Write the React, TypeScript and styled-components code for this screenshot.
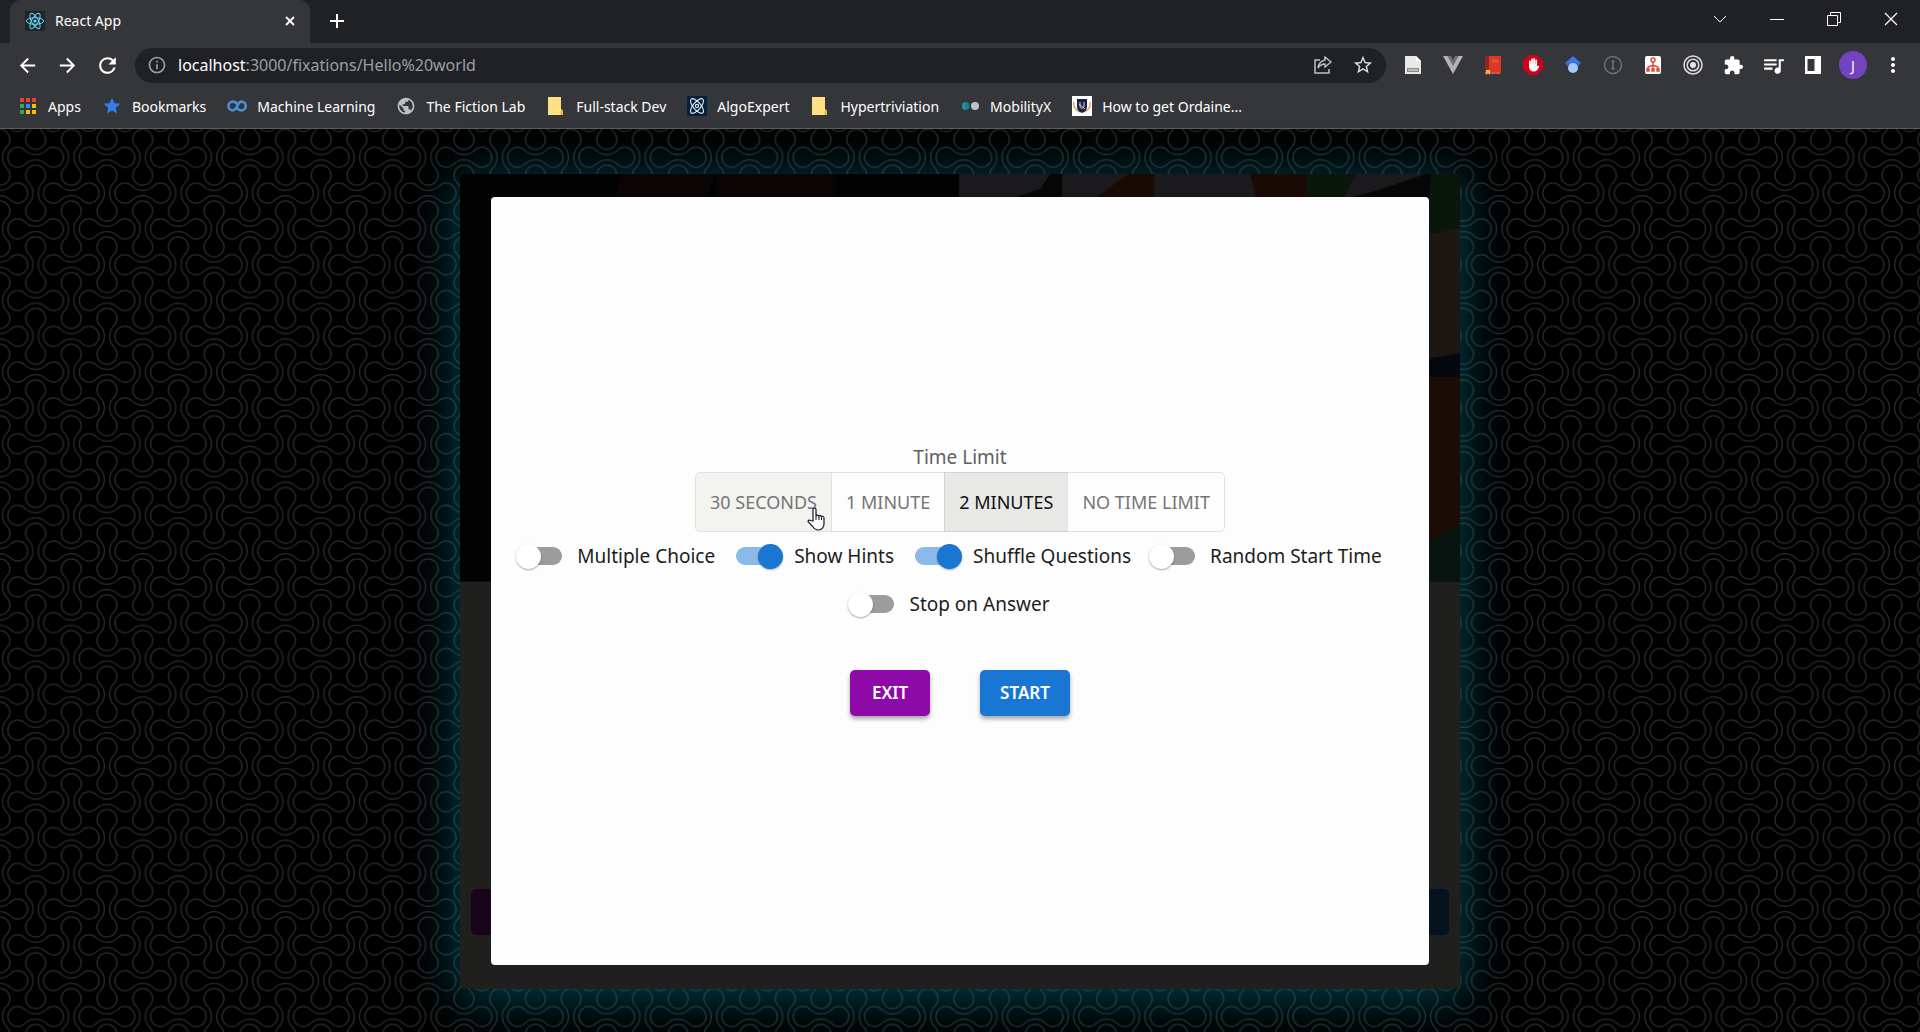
import React, { useState } from "react";
import styled, { createGlobalStyle } from "styled-components";
import {
  MdArrowBack,
  MdArrowForward,
  MdExtension,
  MdInfoOutline,
  MdMoreVert,
  MdPublic,
  MdQueueMusic,
  MdRefresh,
  MdStar,
  MdStarBorder,
} from "react-icons/md";

const uiFont = `"Noto Sans", "Open Sans", sans-serif`;

const GlobalStyle = createGlobalStyle`
  *, *::before, *::after { box-sizing: border-box; }
  body { margin: 0; background: #000; }
  button, input { font: inherit; color: inherit; }
  button { border: 0; padding: 0; background: none; cursor: pointer; }
  svg { display: block; flex: none; }
`;

const Window = styled.div`
  display: flex;
  flex-direction: column;
  min-height: 100vh;
  font-family: ${uiFont};
`;

/* ---------- browser frame ---------- */

const Frame = styled.header`
  flex: none;
  background: #35363a;
  color: #fff;
  border-bottom: 1px solid #5c5d62;
`;

const TabStrip = styled.div`
  display: flex;
  align-items: flex-start;
  height: 43px;
  padding: 0 1px 0 10px;
  background: #202124;
`;

const Tab = styled.div`
  display: flex;
  align-items: center;
  gap: 10px;
  width: 300px;
  height: 43px;
  padding: 0 10px 2px 15px;
  border-radius: 10px 10px 0 0;
  background: #35363a;
  font-size: 14px;
`;

const TabTitle = styled.span`
  flex: 1;
`;

const IconButton = styled.button<{ $w?: number; $h?: number; $color?: string }>`
  display: flex;
  flex: none;
  align-items: center;
  justify-content: center;
  width: ${(p) => p.$w ?? 40}px;
  height: ${(p) => p.$h ?? 40}px;
  color: ${(p) => p.$color ?? "#fff"};
`;

const WindowControls = styled.div`
  display: flex;
  margin-left: auto;
`;

const Toolbar = styled.div`
  display: flex;
  align-items: center;
  height: 44px;
  padding: 0 7px;
`;

const AddressBar = styled.label`
  display: flex;
  flex: 1;
  align-items: center;
  height: 35px;
  margin: 0 7px 0 8px;
  padding: 0 3px 0 12px;
  border-radius: 18px;
  background: #202124;
  color: #9aa0a6;
  font-size: 16px;
`;

const Host = styled.span`
  margin-left: 11px;
  color: #fff;
`;

const AddressInput = styled.input`
  flex: 1;
  min-width: 0;
  padding: 0;
  border: 0;
  outline: 0;
  background: none;
`;

const Avatar = styled.span`
  display: flex;
  align-items: center;
  justify-content: center;
  width: 28px;
  height: 28px;
  border-radius: 50%;
  background: #7444c0;
  font-size: 14px;
`;

const BookmarkBar = styled.nav`
  display: flex;
  align-items: center;
  gap: 21px;
  height: 41px;
  padding: 0 18px 3px;
`;

const Bookmark = styled.a`
  display: flex;
  align-items: center;
  gap: 10px;
  color: #fff;
  font-size: 14px;
  text-decoration: none;
  white-space: nowrap;
`;

const IconSlot = styled.span`
  display: flex;
  justify-content: center;
  width: 20px;
`;

/* ---------- page ---------- */

const Page = styled.main`
  position: relative;
  display: flex;
  flex: 1;
  padding: 45px 23.95% 43px;
  background: #000;
`;

const Wallpaper = styled.svg`
  position: absolute;
  inset: 0;
  width: 100%;
  height: 100%;
`;

const Card = styled.section`
  position: relative;
  display: grid;
  flex: 1;
  border-radius: 5px;
  background: #1f1f1e;
  box-shadow: 0 6px 48px 4px rgba(0, 140, 165, 0.45);
`;

const Game = styled.div`
  display: flex;
  flex-direction: column;
  grid-area: 1 / 1;
`;

const Still = styled.svg`
  flex: 0 0 50%;
  width: 100%;
  min-height: 0;
  border-radius: 5px 5px 0 0;
`;

const GameControls = styled.div`
  display: flex;
  flex: 1;
  align-items: flex-end;
  justify-content: space-between;
  padding: 0 11px 54px;
`;

const DimButton = styled.span<{ $color: string }>`
  width: 90px;
  height: 46px;
  border-radius: 5px;
  background: ${(p) => p.$color};
`;

const Dialog = styled.form`
  display: flex;
  flex-direction: column;
  grid-area: 1 / 1;
  align-items: center;
  justify-content: center;
  margin: 23px 31px 24px;
  padding-bottom: 4px;
  border-radius: 4px;
  background: #fdfdfd;
  color: #1c1c1c;
  z-index: 1;
`;

const GroupLabel = styled.h2`
  margin: 0;
  color: #606060;
  font-size: 19px;
  font-weight: 400;
  line-height: 30px;
`;

const ToggleGroup = styled.div`
  display: flex;
  height: 60px;
`;

const Toggle = styled.button<{ $hover?: boolean }>`
  position: relative;
  padding: 0 14px;
  border: 1px solid #e0e0e0;
  background: ${(p) => (p.$hover ? "#f3f3f0" : "transparent")};
  color: #757575;
  font-size: 18px;

  & + & {
    margin-left: -1px;
  }
  &:first-child {
    border-radius: 5px 0 0 5px;
  }
  &:last-child {
    border-radius: 0 5px 5px 0;
  }
  &[aria-pressed="true"] {
    background: #e8e8e6;
    border-color: #d2d2d0;
    color: #111;
  }
`;

const Pointer = styled.svg`
  position: absolute;
  right: 6px;
  bottom: 0;
`;

const Options = styled.div`
  display: flex;
  flex-wrap: wrap;
  justify-content: center;
`;

const Option = styled.label`
  display: flex;
  align-items: center;
  margin: 0 20px 0 -14px;
  font-size: 19px;
  white-space: nowrap;
  cursor: pointer;
`;

const Switch = styled.input`
  display: grid;
  align-items: center;
  width: 73px;
  height: 48px;
  margin: 0;
  appearance: none;
  cursor: pointer;

  &::before,
  &::after {
    content: "";
    grid-area: 1 / 1;
  }
  &::before {
    height: 18px;
    margin: 0 15px;
    border-radius: 9px;
    background: #9c9c9a;
  }
  &::after {
    width: 25px;
    height: 25px;
    margin-left: 12px;
    border-radius: 50%;
    background: #fff;
    box-shadow: 0 1px 2px rgba(0, 0, 0, 0.35);
  }
  &:checked::before {
    background: #8bbae8;
  }
  &:checked::after {
    margin-left: 37px;
    background: #1976d2;
  }
`;

const Actions = styled.div`
  display: flex;
  gap: 50px;
  margin-top: 42px;
`;

const Action = styled.button<{ $color: string }>`
  min-width: 80px;
  height: 46px;
  padding: 0 20px 2px;
  border-radius: 5px;
  background: ${(p) => p.$color};
  box-shadow: 0 3px 4px rgba(0, 0, 0, 0.35);
  color: #fff;
  font-size: 17px;
  font-weight: 600;
`;

/* ---------- drawings ---------- */

const Svg = ({ size = 20, box = 20, children }: { size?: number; box?: number; children: React.ReactNode }) => (
  <svg width={size} height={size} viewBox={`0 0 ${box} ${box}`} fill="none" aria-hidden="true">
    {children}
  </svg>
);

const Atom = () => (
  <Svg>
    <rect width="20" height="20" rx="1" fill="#20232a" />
    <g stroke="#61dafb" strokeWidth="1">
      <ellipse cx="10" cy="10" rx="8.6" ry="3.3" />
      <ellipse cx="10" cy="10" rx="8.6" ry="3.3" transform="rotate(60 10 10)" />
      <ellipse cx="10" cy="10" rx="8.6" ry="3.3" transform="rotate(120 10 10)" />
    </g>
    <circle cx="10" cy="10" r="1.6" fill="#61dafb" />
  </Svg>
);

const appsColors = ["#ea4335", "#ea4335", "#ea4335", "#34a853", "#4285f4", "#fbbc04", "#34a853", "#fbbc04", "#fbbc04"];
const AppsIcon = () => (
  <Svg size={18} box={18}>
    {appsColors.map((color, i) => (
      <rect key={i} x={1 + (i % 3) * 6} y={1 + Math.floor(i / 3) * 6} width="4" height="4" fill={color} />
    ))}
  </Svg>
);

const Infinity = () => (
  <Svg>
    <path
      d="M10.500 8C9.300 6.400 7.800 5.600 5.800 5.600a4.400 4.400 0 0 0 0 8.800c4.400 0 4.300-8.800 8.600-8.800a4.400 4.400 0 0 1 0 8.800c-2 0-3.300-1-4.300-2.400"
      stroke="#4a8fd0"
      strokeWidth="2.600"
    />
  </Svg>
);

const Folder = () => (
  <Svg>
    <path d="M2 1h13v12l2 2v4H2z" fill="#ffe082" />
    <path d="M15 13l2 2v4h-3z" fill="#e9b949" />
  </Svg>
);

const AlgoIcon = () => (
  <Svg>
    <rect width="20" height="20" rx="2" fill="#02203f" />
    <g stroke="#e8eef5" strokeWidth="1.1">
      <ellipse cx="10" cy="10" rx="9" ry="3.8" transform="rotate(50 10 10)" />
      <ellipse cx="10" cy="10" rx="9" ry="3.8" transform="rotate(130 10 10)" />
      <circle cx="10" cy="10" r="1.6" />
    </g>
  </Svg>
);

const MobilityIcon = () => (
  <Svg>
    <path d="M6 6a4 4 0 0 0 0 8z" fill="#1d98a8" />
    <path d="M5 6c3-.500 4.500 1.500 4.500 4S8 14.500 5 14z" fill="#177f92" />
    <circle cx="15" cy="10" r="4" fill="#bfc3c6" />
  </Svg>
);

const Crest = () => (
  <Svg>
    <rect width="20" height="20" fill="#fff" />
    <path d="M2 6c-1 5 1 8 6 10M18 6c1 5-1 8-6 10" stroke="#d9b06a" strokeWidth="1.500" />
    <path d="M5 3h10v8c0 3-2 5-5 6-3-1-5-3-5-6z" fill="#1b2240" />
    <path d="M8 6v4c0 3 4 3 4 0V6M7 8l6 5" stroke="#c9cdd8" />
  </Svg>
);

const bookmarks: [string, React.ReactNode][] = [
  ["Apps", <AppsIcon />],
  ["Bookmarks", <MdStar size={20} color="#2f80ed" />],
  ["Machine Learning", <Infinity />],
  ["The Fiction Lab", <MdPublic size={20} color="#bdc1c6" />],
  ["Full-stack Dev", <Folder />],
  ["AlgoExpert", <AlgoIcon />],
  ["Hypertriviation", <Folder />],
  ["MobilityX", <MobilityIcon />],
  ["How to get Ordaine...", <Crest />],
];

const extensions: [string, React.ReactNode][] = [
  [
    "Document",
    <Svg>
      <path d="M2 1h11l5 5v13H2z" fill="#e8e8e6" />
      <path d="M13 1v5h5z" fill="#fff" />
      <rect x="4" y="13" width="12" height="4" fill="#8c8c88" />
      <path d="M5 15h10" stroke="#e8e8e6" />
    </Svg>,
  ],
  [
    "Vue",
    <Svg>
      <path d="M0 1h5l5 9 5-9h5L10 19z" fill="#b4b4b2" />
      <path d="M4.500 1H8l2 4 2-4h3.500L10 11z" fill="#70726f" />
    </Svg>,
  ],
  [
    "Notebook",
    <Svg>
      <rect x="2" y="1" width="4" height="18" fill="#8d2a20" />
      <rect x="6" y="1" width="12" height="17" fill="#dd3826" />
      <path d="M9 5h6M9 7h6" stroke="#e8604f" />
      <path d="M2 17h15v2H2z" fill="#c9544a" />
      <path d="M3 15h4v5l-2-2-2 2z" fill="#f0b44c" />
    </Svg>,
  ],
  [
    "Blocker",
    <Svg>
      <path d="M6 0h8l6 6v8l-6 6H6l-6-6V6z" fill="#d4001a" />
      <path
        d="M6 11V6.500a.9.900 0 0 1 1.800 0V9h.3V4.500a.9.900 0 0 1 1.800 0V9h.3V4a.9.900 0 0 1 1.800 0v5h.3V5.500a.9.900 0 0 1 1.800 0v6c1-1 2-1 2 0-1 3-2.500 5-5.600 5C7.500 16.500 6 14 6 11z"
        fill="#fff"
      />
    </Svg>,
  ],
  [
    "Scholar",
    <Svg>
      <path d="M10 1l8 7-4 3H6L2 8z" fill="#3b78e0" />
      <circle cx="10" cy="13" r="5" fill="#a8c8fa" />
      <path d="M5 12a5 5 0 0 1 10 0l3-4H2z" fill="#3367c6" />
    </Svg>,
  ],
  [
    "Password manager",
    <Svg>
      <circle cx="10" cy="10" r="8.500" stroke="#707174" strokeWidth="1.500" />
      <path d="M10 5v10M8.500 6.500h3M8.500 13.500h3" stroke="#707174" strokeWidth="1.600" />
    </Svg>,
  ],
  [
    "Sitemap",
    <Svg>
      <rect x="2" y="1" width="16" height="18" rx="2" fill="#fff" />
      <g stroke="#dd4b39" strokeWidth="1.500">
        <circle cx="10" cy="5" r="2" />
        <path d="M10 7v8M5 15v-3l5-2 5 2v3" />
        <rect x="4" y="14" width="2" height="2" />
        <rect x="9" y="14" width="2" height="2" />
        <rect x="14" y="14" width="2" height="2" />
      </g>
    </Svg>,
  ],
  [
    "Target",
    <Svg>
      <g stroke="#dcdcdc" strokeWidth="1.500">
        <circle cx="10" cy="10" r="9" />
        <circle cx="10" cy="10" r="5.800" />
      </g>
      <circle cx="10" cy="10" r="3" fill="#e6e6e6" />
    </Svg>,
  ],
  ["Extensions", <MdExtension size={21} />],
  ["Media", <MdQueueMusic size={25} />],
  [
    "Side panel",
    <Svg>
      <path d="M2 1h16v18H2z" fill="#fff" />
      <path d="M4.500 4h7v12h-7z" fill="#35363a" />
    </Svg>,
  ],
  ["Profile", <Avatar>J</Avatar>],
  ["Menu", <MdMoreVert size={24} />],
];

const DUMBBELL =
  "M15.100 9.900A21.360 21.360 0 0 0 -15.100 9.900A14 14 0 1 1 -15.100 -9.900A21.360 21.360 0 0 0 15.100 -9.900A14 14 0 1 1 15.100 9.900Z";

const Pattern = () => (
  <Wallpaper aria-hidden="true">
    <defs>
      <pattern
        id="links"
        width="100"
        height="100"
        patternUnits="userSpaceOnUse"
        patternTransform="translate(35.6 28.3) scale(.714 .716)"
      >
        <g fill="none" stroke="#2b2b29" strokeWidth="1.800">
          {[0, 100].flatMap((x) =>
            [0, 100].map((y) => <path key={`${x}-${y}`} d={DUMBBELL} transform={`translate(${x} ${y})`} />)
          )}
          <path d={DUMBBELL} transform="translate(50 50)" />
          <path d={DUMBBELL} transform="translate(50 0) rotate(90)" />
          <path d={DUMBBELL} transform="translate(50 100) rotate(90)" />
          <path d={DUMBBELL} transform="translate(0 50) rotate(90)" />
          <path d={DUMBBELL} transform="translate(100 50) rotate(90)" />
        </g>
      </pattern>
    </defs>
    <rect width="100%" height="100%" fill="url(#links)" />
  </Wallpaper>
);

const VideoStill = () => (
  <Still viewBox="0 0 1000 407" preserveAspectRatio="none" aria-hidden="true">
    <rect width="1000" height="407" fill="#020202" />
    <path d="M160 0h95l-10 30h-90zM256 0h120v30H256z" fill="#0b0404" />
    <rect x="499" width="501" height="407" fill="#1b191b" />
    <path d="M550 25l30-10 10-15h12v25zM885 25l30-8 50-17h10v25z" fill="#050706" />
    <path d="M634 25l34-25h26v25zM790 0h56v25h-50z" fill="#1a0a06" />
    <path d="M846 0h50l-14 25h-36zM970 0h30v62l-31 8z" fill="#0a150b" />
    <path d="M969 60l31-6v125l-31 5z" fill="#1d1713" />
    <path d="M969 184l31-5v24h-31z" fill="#05080f" />
    <path d="M969 203h31v145l-31 20z" fill="#1b0c06" />
    <path d="M969 368l31-20v59h-31z" fill="#08140f" />
  </Still>
);

const Hand = () => (
  <Pointer width="18" height="24" viewBox="0 0 18 24" aria-hidden="true">
    <path
      d="M6 14V2.500a1.500 1.500 0 0 1 3 0V9c.3-1.300 2.700-1.200 2.900.2.500-1 2.400-.7 2.600.6.600-.8 2.500-.4 2.500 1.200V17c0 3-2 6-5.500 6-3 0-4.500-1.500-5.700-3.500L1.300 15c-.7-1.300.8-2.600 2.200-1.500z"
      fill="#fff"
      stroke="#14142a"
      strokeWidth="1.200"
    />
    <path d="M9 9v4M12 10v3M14.500 11v2" stroke="#14142a" />
  </Pointer>
);

const limits = ["30 SECONDS", "1 MINUTE", "2 MINUTES", "NO TIME LIMIT"];
const options: [string, boolean][] = [
  ["Multiple Choice", false],
  ["Show Hints", true],
  ["Shuffle Questions", true],
  ["Random Start Time", false],
  ["Stop on Answer", false],
];

export default function App() {
  const [limit, setLimit] = useState("2 MINUTES");

  return (
    <Window>
      <GlobalStyle />
      <Frame>
        <TabStrip>
          <Tab>
            <Atom />
            <TabTitle>React App</TabTitle>
            <IconButton $w={20} $h={20} aria-label="Close tab">
              <Svg size={10} box={10}>
                <path d="M1 1l8 8M9 1L1 9" stroke="#fff" strokeWidth="1.800" />
              </Svg>
            </IconButton>
          </Tab>
          <IconButton $w={54} $h={42} aria-label="New tab">
            <Svg size={16} box={16}>
              <path d="M8 1v14M1 8h14" stroke="#fff" strokeWidth="2" />
            </Svg>
          </IconButton>
          <WindowControls>
            <IconButton $w={57} $h={37} aria-label="Search tabs">
              <Svg size={14} box={14}>
                <path d="M1 4l6 6 6-6" stroke="#fff" />
              </Svg>
            </IconButton>
            <IconButton $w={57} $h={37} aria-label="Minimize">
              <Svg size={14} box={14}>
                <path d="M0 7.500h14" stroke="#fff" />
              </Svg>
            </IconButton>
            <IconButton $w={57} $h={37} aria-label="Restore">
              <Svg size={14} box={14}>
                <path d="M.5 3.500h10v10H.5zM3.500 3.500v-3h10v10h-3" stroke="#fff" />
              </Svg>
            </IconButton>
            <IconButton $w={57} $h={37} aria-label="Close window">
              <Svg size={14} box={14}>
                <path d="M1 1l12 12M13 1L1 13" stroke="#fff" strokeWidth="1.200" />
              </Svg>
            </IconButton>
          </WindowControls>
        </TabStrip>

        <Toolbar>
          <IconButton aria-label="Back"><MdArrowBack size={23} /></IconButton>
          <IconButton aria-label="Forward"><MdArrowForward size={23} /></IconButton>
          <IconButton aria-label="Reload"><MdRefresh size={25} /></IconButton>
          <AddressBar>
            <MdInfoOutline size={20} />
            <Host>localhost</Host>
            <AddressInput aria-label="Address" defaultValue=":3000/fixations/Hello%20world" />
            <IconButton $color="#bdc1c6" aria-label="Share">
              <Svg>
                <path d="M7 5H2v13h14v-4" stroke="currentColor" strokeWidth="1.500" />
                <path d="M12 2l6 5-6 5V9c-3 0-5 1-7 4 .500-4 3-7 7-8z" stroke="currentColor" strokeWidth="1.400" />
              </Svg>
            </IconButton>
            <IconButton $color="#dadce0" aria-label="Bookmark this page"><MdStarBorder size={22} /></IconButton>
          </AddressBar>
          {extensions.map(([name, icon]) => (
            <IconButton key={name} aria-label={name}>{icon}</IconButton>
          ))}
        </Toolbar>

        <BookmarkBar>
          {bookmarks.map(([name, icon]) => (
            <Bookmark key={name} href="#">
              <IconSlot>{icon}</IconSlot>
              {name}
            </Bookmark>
          ))}
        </BookmarkBar>
      </Frame>

      <Page>
        <Pattern />
        <Card>
          <Game>
            <VideoStill />
            <GameControls>
              <DimButton $color="#170519" />
              <DimButton $color="#06131f" />
            </GameControls>
          </Game>
          <Dialog onSubmit={(e) => e.preventDefault()}>
            <GroupLabel id="limit">Time Limit</GroupLabel>
            <ToggleGroup role="group" aria-labelledby="limit">
              {limits.map((name, i) => (
                <Toggle
                  key={name}
                  type="button"
                  $hover={i === 0}
                  aria-pressed={limit === name}
                  onClick={() => setLimit(name)}
                >
                  {name}
                  {i === 0 && <Hand />}
                </Toggle>
              ))}
            </ToggleGroup>
            <Options>
              {options.map(([name, on]) => (
                <Option key={name}>
                  <Switch type="checkbox" role="switch" defaultChecked={on} />
                  {name}
                </Option>
              ))}
            </Options>
            <Actions>
              <Action type="button" $color="#8e0aa8">EXIT</Action>
              <Action type="submit" $color="#1976d2">START</Action>
            </Actions>
          </Dialog>
        </Card>
      </Page>
    </Window>
  );
}
